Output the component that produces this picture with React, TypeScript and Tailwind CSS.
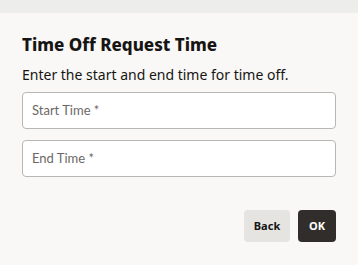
import React from 'react';

const font = { fontFamily: '"Noto Sans", "Liberation Sans", sans-serif' };

const Field = ({ label }: { label: string }) => (
  <div className="h-[37px] w-full rounded-[4px] border border-[#b9b7b3] bg-white px-[9px] flex items-center">
    <span className="text-[13px] text-[#6b6866]" style={{ fontFamily: 'Lato, "Noto Sans", sans-serif' }}>
      {label}
    </span>
  </div>
);

const App = () => {
  return (
    <div className="w-[358px] h-[265px] flex flex-col bg-[#f9f8f6]" style={font}>
      {/* backdrop strip */}
      <div className="h-[13px] bg-[#ededec]" />

      <div className="flex flex-col px-[22px] pt-[20px]">
        <h2 className="text-[17px] leading-[24px] font-extrabold text-[#161513]">Time Off Request Time</h2>
        <p className="mt-[9px] text-[14px] leading-[18px] text-[#161513]">Enter the start and end time for time off.</p>

        <div className="mt-[8px] flex flex-col gap-[11px]">
          <Field label="Start Time *" />
          <Field label="End Time *" />
        </div>

        <div className="mt-[33px] flex justify-end gap-[8px]">
          <button className="h-[32px] w-[46px] rounded-[4px] bg-[#e5e4e1] text-[11px] font-bold text-[#161513]">Back</button>
          <button className="h-[32px] w-[38px] rounded-[4px] bg-[#312d2a] text-[11px] font-bold text-white">OK</button>
        </div>
      </div>
    </div>
  );
};

export default App;
